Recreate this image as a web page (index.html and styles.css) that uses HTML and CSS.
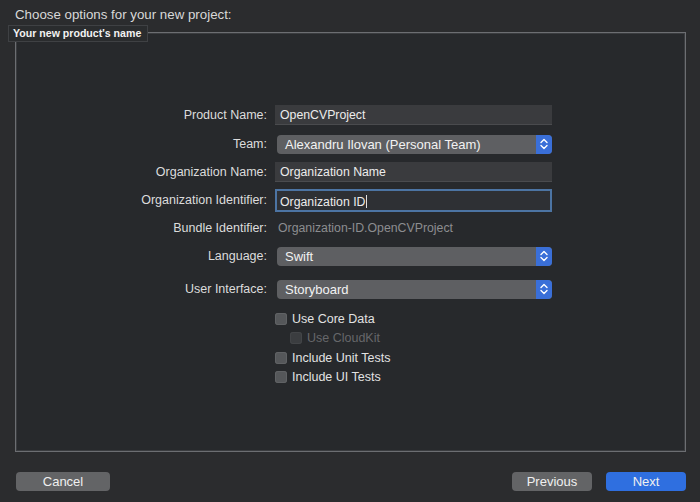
FILE: index.html
```html
<html lang="en">
<head>
  <meta charset="UTF-8">
  <meta name="viewport" content="width=device-width, initial-scale=1.0">
  <title>Choose options for your new project</title>
  <link rel="stylesheet" href="styles.css">
</head>
<body>
  <!-- Sheet title -->
  <div class="sheet-title">Choose options for your new project:</div>

  <!-- Options panel -->
  <div class="panel">
    <div class="tooltip">Your new product's name</div>

    <div class="form">
      <div class="row">
        <label class="label">Product Name:</label>
        <div class="field">OpenCVProject</div>
      </div>
      <div class="row row-team">
        <label class="label">Team:</label>
        <div class="popup">
          <span>Alexandru Ilovan (Personal Team)</span>
          <span class="stepper">
            <svg width="10" height="14" viewBox="0 0 10 14"><path d="M2 5.5 L5 2.5 L8 5.5 M2 8.5 L5 11.5 L8 8.5" fill="none" stroke="#fff" stroke-width="1.4" stroke-linecap="round" stroke-linejoin="round"/></svg>
          </span>
        </div>
      </div>
      <div class="row">
        <label class="label">Organization Name:</label>
        <div class="field">Organization Name</div>
      </div>
      <div class="row">
        <label class="label">Organization Identifier:</label>
        <div class="field field-focus">Organization ID<span class="caret"></span></div>
      </div>
      <div class="row">
        <label class="label">Bundle Identifier:</label>
        <div class="static">Organization-ID.OpenCVProject</div>
      </div>
      <div class="row">
        <label class="label">Language:</label>
        <div class="popup">
          <span>Swift</span>
          <span class="stepper">
            <svg width="10" height="14" viewBox="0 0 10 14"><path d="M2 5.5 L5 2.5 L8 5.5 M2 8.5 L5 11.5 L8 8.5" fill="none" stroke="#fff" stroke-width="1.4" stroke-linecap="round" stroke-linejoin="round"/></svg>
          </span>
        </div>
      </div>
      <div class="row row-ui">
        <label class="label">User Interface:</label>
        <div class="popup">
          <span>Storyboard</span>
          <span class="stepper">
            <svg width="10" height="14" viewBox="0 0 10 14"><path d="M2 5.5 L5 2.5 L8 5.5 M2 8.5 L5 11.5 L8 8.5" fill="none" stroke="#fff" stroke-width="1.4" stroke-linecap="round" stroke-linejoin="round"/></svg>
          </span>
        </div>
      </div>

      <!-- Checkboxes -->
      <div class="checks">
        <div class="check"><span class="box"></span>Use Core Data</div>
        <div class="check check-sub disabled"><span class="box"></span>Use CloudKit</div>
        <div class="check"><span class="box"></span>Include Unit Tests</div>
        <div class="check"><span class="box"></span>Include UI Tests</div>
      </div>
    </div>
  </div>

  <!-- Bottom buttons -->
  <div class="footer">
    <button class="btn btn-cancel">Cancel</button>
    <div class="footer-right">
      <button class="btn">Previous</button>
      <button class="btn btn-primary">Next</button>
    </div>
  </div>
</body>
</html>
```

FILE: styles.css
```css
body {
  margin: 0;
  width: 700px;
  height: 502px;
  background: #2b2c2e;
  font-family: "Liberation Sans", Arial, sans-serif;
  color: #e8e8e8;
  overflow: hidden;
}

.sheet-title {
  padding: 7px 0 0 15px;
  height: 25px;
  box-sizing: border-box;
  font-size: 13.3px;
  color: #d8d8d8;
}

/* Panel with the form */
.panel {
  position: relative;
  margin: 0 14px 0 15px;
  height: 420px;
  box-sizing: border-box;
  margin-top: 7px;
  background: #27292c;
  border: 1px solid #6c6e72;
  box-shadow: inset 0 0 0 1px #3a3c3f;
}

.tooltip {
  position: absolute;
  left: -8px;
  top: -8px;
  padding: 1px 6px 2px 4px;
  background: #2a2c2e;
  border: 1px solid #3f4144;
  font-size: 10.6px;
  font-weight: bold;
  color: #f2f2f2;
}

.form {
  display: flex;
  flex-direction: column;
  gap: 8px;
  padding-top: 72px;
}

.row {
  display: grid;
  grid-template-columns: 251px 277px;
  column-gap: 8px;
  height: 20px;
  align-items: center;
}

.row-team {
  margin-top: 1px;
}

.row-ui {
  margin-top: 5px;
}

.label {
  text-align: right;
  font-size: 12.5px;
  color: #dcdcdc;
}

.field {
  height: 20px;
  box-sizing: border-box;
  padding: 3px 5px 0;
  background: #3a3b3e;
  border-bottom: 1px solid #4a4b4e;
  font-size: 12.3px;
  color: #ececec;
}

.field-focus {
  height: 23px;
  margin: -1px 0 -2px;
  padding-top: 4px;
  background: #2e3034;
  border: 2px solid #4c74a3;
  padding-left: 3px;
}

.caret {
  display: inline-block;
  width: 1px;
  height: 13px;
  margin-left: 1px;
  vertical-align: -2px;
  background: #e0e0e0;
}

.static {
  padding-left: 3px;
  font-size: 12.3px;
  color: #8c8d90;
}

.popup {
  display: flex;
  justify-content: space-between;
  align-items: center;
  height: 19px;
  margin-left: 2px;
  padding-left: 8px;
  background: #5e5f62;
  border-radius: 4px;
  font-size: 13px;
  color: #f2f2f2;
  overflow: hidden;
}

.stepper {
  display: flex;
  align-items: center;
  justify-content: center;
  width: 16px;
  height: 19px;
  background: #3a6fd8;
}

/* Checkboxes */
.checks {
  display: flex;
  flex-direction: column;
  margin-top: 2px;
  padding-left: 259px;
}

.check {
  display: flex;
  align-items: center;
  height: 19.5px;
  font-size: 12.5px;
  color: #e2e2e2;
}

.box {
  width: 12px;
  height: 12px;
  margin-right: 5px;
  border-radius: 3px;
  background: #55575a;
  box-shadow: inset 0 0 0 1px #606265;
}

.check-sub {
  padding-left: 15px;
}

.disabled {
  color: #66676a;
}

.disabled .box {
  background: #3b3d40;
  box-shadow: inset 0 0 0 1px #434548;
}

/* Footer buttons */
.footer {
  display: flex;
  justify-content: space-between;
  padding: 20px 14px 0 16px;
}

.footer-right {
  display: flex;
  gap: 14px;
}

.btn {
  width: 80px;
  height: 19px;
  padding: 0;
  border: none;
  border-radius: 4px;
  background: #636466;
  font-family: "Liberation Sans", Arial, sans-serif;
  font-size: 13px;
  color: #f0f0f0;
}

.btn-cancel {
  width: 94px;
}

.btn-primary {
  background: #2f6fe0;
}
```
